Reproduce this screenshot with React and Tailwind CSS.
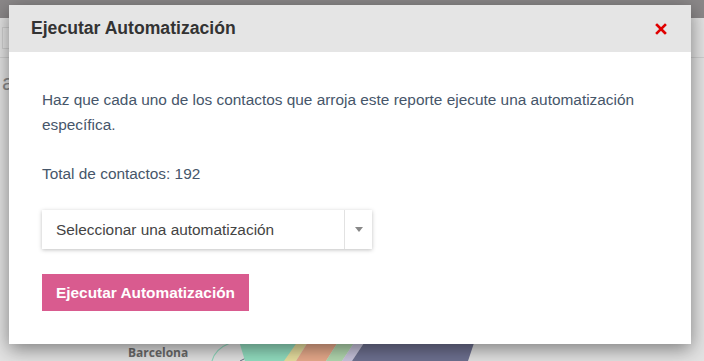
import { useState } from 'react';

const font = { fontFamily: '"Liberation Sans", Arial, sans-serif' };

// background report page, dimmed by the modal backdrop
const PageBehind = () => (
    <div className="w-full h-full flex flex-col bg-[#e3e3e3]">
        <div className="h-[18px] bg-[#8b8889] shrink-0" />
        <div className="h-[40px] border-b border-[#cfcfcf] flex items-center px-[2px] shrink-0">
            <div className="w-[12px] h-[22px] border border-[#d0d0d0] bg-[#e6e6e6]" />
        </div>
        <div className="flex-1 relative px-[2px] pt-[8px]">
            <span className="text-[22px] text-[#8a8a8a]">a</span>
        </div>
    </div>
);

const Chart = () => (
    <svg className="absolute left-0 bottom-0" width="704" height="30" viewBox="0 0 704 30">
        <path d="M300 0 L240 30" stroke="#6a6f85" strokeWidth="1" fill="none" />
        <path d="M230 12 Q215 18 212 30" stroke="#8fd8bd" strokeWidth="1.2" fill="none" />
        <path d="M236 0 L310 0 L290 30 L245 30 Z" fill="#93dfc1" />
        <path d="M305 0 L315 0 L296 30 L284 30 Z" fill="#e9e0a0" />
        <path d="M315 0 L345 0 L326 30 L296 30 Z" fill="#e9ab8c" />
        <path d="M345 0 L362 0 L342 30 L326 30 Z" fill="#b3d9b0" />
        <path d="M362 0 L372 0 L352 30 L342 30 Z" fill="#c9c5dd" />
        <path d="M372 0 L478 0 L468 30 L352 30 Z" fill="#6e7191" />
        <path d="M500 12 L510 12" stroke="#666" strokeWidth="1.5" />
    </svg>
);

export default function App() {
    const [value, setValue] = useState('');

    return (
        <div className="relative w-[704px] h-[361px] overflow-hidden" style={font}>
            <PageBehind />
            <Chart />
            <span className="absolute left-[128px] top-[346px] text-[12px] leading-[14px] font-bold text-[#6b6b6b]" style={{ fontFamily: '"Open Sans", sans-serif' }}>
                Barcelona
            </span>

            {/* Modal */}
            <div className="absolute left-[9px] top-[5px] w-[682px] bg-white shadow-[0_5px_18px_rgba(0,0,0,0.45)]">
                <div className="h-[47px] bg-[#e5e5e5] flex items-center justify-between pl-[22px] pr-[24px]">
                    <h4 className="text-[17.6px] font-bold text-[#333]">Ejecutar Automatización</h4>
                    <button className="leading-none">
                        <svg width="12" height="12" viewBox="0 0 12 12">
                            <path d="M2 2 L10 10 M10 2 L2 10" stroke="#e00000" strokeWidth="2.6" strokeLinecap="square" />
                        </svg>
                    </button>
                </div>
                <div className="pl-[33px] pr-[28px] pt-[35px] pb-[33px] text-[15.4px] text-[#46566a]">
                    <p className="leading-[25px]">
                        Haz que cada uno de los contactos que arroja este reporte ejecute una automatización específica.
                    </p>
                    <p className="mt-[24px] leading-[25px]">Total de contactos: 192</p>
                    <div className="mt-[24px] w-[330px] h-[39px] flex bg-white shadow-[0_1px_4px_rgba(0,0,0,0.25)]">
                        <div className="flex-1 flex items-center pl-[14px] text-[#444]">
                            {value || 'Seleccionar una automatización'}
                        </div>
                        <button
                            className="w-[28px] border-l border-[#e2e2e2] flex items-center justify-center"
                            onClick={() => setValue('')}
                        >
                            <svg width="8" height="5" viewBox="0 0 8 5">
                                <path d="M0 0 L8 0 L4 5 Z" fill="#888" />
                            </svg>
                        </button>
                    </div>
                    <button className="mt-[25px] h-[37px] w-[207px] bg-[#d95b8f] text-white font-bold text-[15.4px]">
                        Ejecutar Automatización
                    </button>
                </div>
            </div>
        </div>
    );
}
